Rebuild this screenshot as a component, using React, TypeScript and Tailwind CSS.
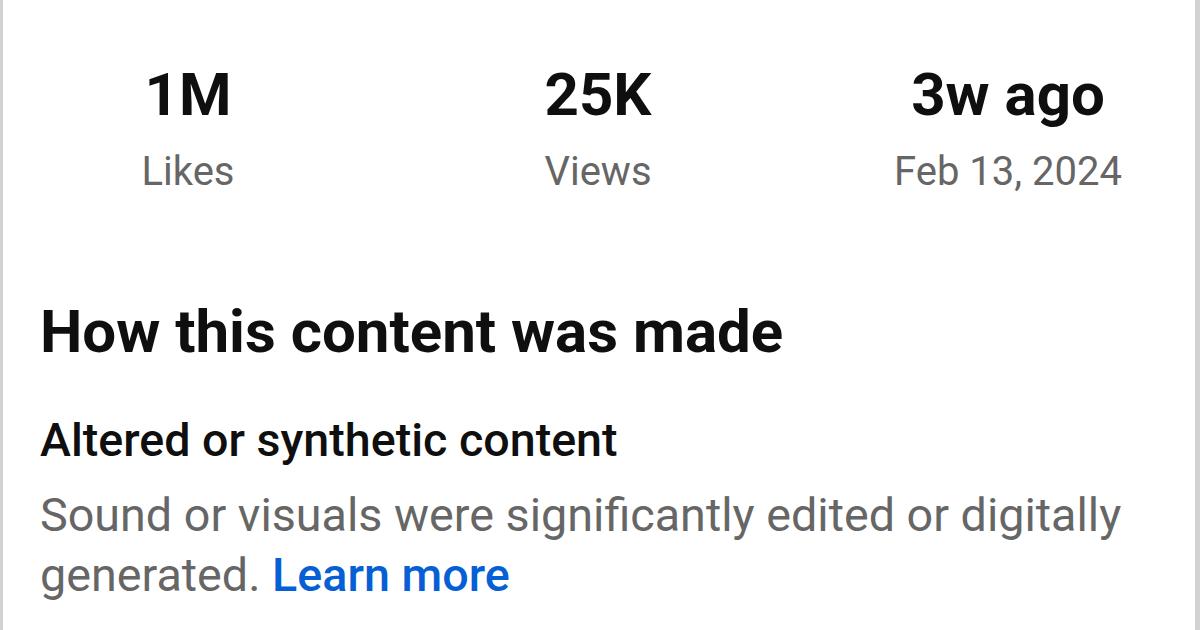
const stats = [
  { value: "1M", label: "Likes" },
  { value: "25K", label: "Views" },
  { value: "3w ago", label: "Feb 13, 2024" },
];

export default function App() {
  return (
    <div className="w-[1200px] h-[630px] overflow-hidden bg-white font-['Roboto',sans-serif]">
      <div className="h-full border-l-[3px] border-r-[5px] border-[#d2d2d2] bg-white">
        <div className="flex justify-center gap-[110px] pt-[60px] pr-[2px]">
          {stats.map((s) => (
            <div key={s.label} className="w-[300px] flex flex-col items-center">
              <div className="text-[60px] leading-[70px] font-bold text-[#0f0f0f]">{s.value}</div>
              <div className="mt-[17px] text-[40px] leading-[50px] text-[#666666]">{s.label}</div>
            </div>
          ))}
        </div>
        <div className="pl-[37px] pr-[30px] pt-[100px]">
          <h2 className="text-[60px] leading-[70px] font-bold text-[#0f0f0f]">How this content was made</h2>
          <h3 className="mt-[45px] text-[46.6px] leading-[56px] font-medium text-[#0f0f0f]">Altered or synthetic content</h3>
          <p className="mt-[17px] text-[46.7px] leading-[60px] text-[#666666]">
            Sound or visuals were significantly edited or digitally generated.{" "}
            <span className="text-[#065fd4] font-medium">Learn more</span>
          </p>
        </div>
      </div>
    </div>
  );
}
